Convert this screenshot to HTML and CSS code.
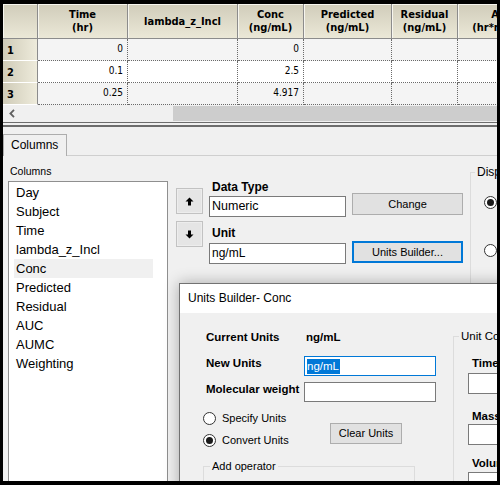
FILE: index.html
```html
<!DOCTYPE html>
<html>
<head>
<meta charset="utf-8">
<title>Columns</title>
<link rel="stylesheet" href="styles.css">
</head>
<body>
<div class="app">
  <div class="grid">
    <div class="row">
      <div class="hc"></div>
      <div class="hc">Time<br>(hr)</div>
      <div class="hc">lambda_z_Incl</div>
      <div class="hc">Conc<br>(ng/mL)</div>
      <div class="hc">Predicted<br>(ng/mL)</div>
      <div class="hc">Residual<br>(ng/mL)</div>
      <div class="hc">AUC<br>(hr*ng/mL)</div>
    </div>
    <div class="row alt">
      <div class="rh">1</div><div class="c">0</div><div class="c"></div><div class="c">0</div><div class="c"></div><div class="c"></div><div class="c"></div>
    </div>
    <div class="row">
      <div class="rh">2</div><div class="c">0.1</div><div class="c"></div><div class="c">2.5</div><div class="c"></div><div class="c"></div><div class="c"></div>
    </div>
    <div class="row alt">
      <div class="rh">3</div><div class="c">0.25</div><div class="c"></div><div class="c">4.917</div><div class="c"></div><div class="c"></div><div class="c"></div>
    </div>
  </div>

  <div class="hscroll">
    <div class="sarrow"><svg width="6" height="9" viewBox="0 0 6 9"><polyline points="5,0.8 1.4,4.5 5,8.2" fill="none" stroke="#606060" stroke-width="1.8"/></svg></div>
    <div class="track"><div class="thumb"></div></div>
  </div>
  <div class="splitter"></div>

  <div class="tabstrip"><div class="tab">Columns</div></div>

  <div class="tabpage">
    <div class="col-list">
      <div class="col-label">Columns</div>
      <div class="listbox">
        <div class="li">Day</div>
        <div class="li">Subject</div>
        <div class="li">Time</div>
        <div class="li">lambda_z_Incl</div>
        <div class="li sel">Conc</div>
        <div class="li">Predicted</div>
        <div class="li">Residual</div>
        <div class="li">AUC</div>
        <div class="li">AUMC</div>
        <div class="li">Weighting</div>
      </div>
    </div>
    <div class="col-arrows">
      <div class="abtn"><svg width="9" height="9" viewBox="0 0 9 9"><path d="M4.5 0.5 L8.5 4.5 H6 V8.5 H3 V4.5 H0.5 Z" fill="#000"/></svg></div>
      <div class="abtn"><svg width="9" height="9" viewBox="0 0 9 9"><path d="M4.5 8.5 L8.5 4.5 H6 V0.5 H3 V4.5 H0.5 Z" fill="#000"/></svg></div>
    </div>
    <div class="col-fields">
      <div class="flabel">Data Type</div>
      <div class="frow">
        <div class="tb tb-a">Numeric</div>
        <div class="btn btn-a">Change</div>
      </div>
      <div class="flabel flabel-unit">Unit</div>
      <div class="frow">
        <div class="tb tb-b">ng/mL</div>
        <div class="btn btn-b">Units Builder...</div>
      </div>
    </div>
    <fieldset class="dis">
      <legend>Display</legend>
      <div class="dis-inner">
        <div class="radio on dis-r1"></div>
        <div class="radio dis-r2"></div>
      </div>
    </fieldset>
  </div>

  <div class="dialog">
    <div class="dtitle">Units Builder- Conc</div>
    <div class="dbody">
      <div class="dleft">
        <div class="drow drow-1">
          <div class="dlabel">Current Units</div>
          <div class="dlabel dval">ng/mL</div>
        </div>
        <div class="drow drow-2">
          <div class="dlabel">New Units</div>
          <div class="dtb focus"><span class="hl">ng/mL</span></div>
        </div>
        <div class="drow drow-3">
          <div class="dlabel">Molecular weight</div>
          <div class="dtb"></div>
        </div>
        <div class="dmid">
          <div class="rgroup">
            <div class="ropt"><span class="radio"></span><span>Specify Units</span></div>
            <div class="ropt"><span class="radio on"></span><span>Convert Units</span></div>
          </div>
          <div class="clearbtn">Clear Units</div>
        </div>
        <fieldset class="addop">
          <legend>Add operator</legend>
        </fieldset>
      </div>
      <fieldset class="dright">
        <legend>Unit Conversion</legend>
        <div class="dright-inner">
          <div class="rlabel rl-time">Time</div>
          <div class="rtb rt-time"></div>
          <div class="rlabel rl-mass">Mass</div>
          <div class="rtb"></div>
          <div class="rlabel rl-vol">Volume</div>
          <div class="rtb rt-vol"></div>
        </div>
      </fieldset>
    </div>
  </div>
</div>
</body>
</html>
```

FILE: styles.css
```css
* { box-sizing: border-box; }
html, body { margin: 0; padding: 0; }
body {
  background: #000;
  width: 500px;
  height: 485px;
  padding: 4px 3px 4px 3px;
  overflow: hidden;
  font-family: "Liberation Sans", Arial, sans-serif;
  color: #000;
}
.app {
  position: relative;
  width: 494px;
  height: 477px;
  background: #f0f0f0;
  overflow: hidden;
}

/* ---------- data grid ---------- */
.grid {
  display: grid;
  grid-template-columns: 35px 90px 110px 66px 88px 66px 90px;
  grid-template-rows: 35px 22px 22px 22px;
  width: 545px;
  background: #fff;
  font-family: "DejaVu Sans Condensed", "DejaVu Sans", sans-serif;
  font-size: 10px;
}
.row { display: contents; }
.hc {
  background: linear-gradient(#d0ccba, #ebe8d7);
  border-right: 1px solid #8c8c8c;
  border-bottom: 1px solid #8c8c8c;
  box-shadow: inset 1px 1px 0 #f6f5ee;
  display: flex;
  align-items: center;
  justify-content: center;
  text-align: center;
  font-weight: bold;
  font-size: 11px;
  line-height: 13px;
  white-space: nowrap;
}
.rh {
  background: linear-gradient(90deg, #cfcbb8, #eeebdb);
  border-right: 1px solid #8c8c8c;
  border-bottom: 1px solid #fff;
  font-weight: bold;
  font-size: 11px;
  display: flex;
  align-items: center;
  padding-left: 4px;
  padding-top: 1px;
}
.c {
  border-right: 1px dotted #6a6a6a;
  border-bottom: 1px dotted #6a6a6a;
  text-align: right;
  padding-right: 4px;
  line-height: 20px;
}
.row.alt .c { background: #f4f4f4; }

/* ---------- scrollbar + splitter ---------- */
.hscroll {
  display: flex;
  height: 16px;
  background: #f0f0f0;
}
.sarrow {
  width: 17px;
  display: flex;
  align-items: center;
  justify-content: center;
}
.track {
  flex: 1;
  display: flex;
  padding: 1px 0 0 0;
}
.thumb {
  margin-left: 153px;
  flex: 1;
  background: #cdcdcd;
}
.splitter {
  height: 6px;
  background: linear-gradient(#f0f0f0 0 1px, #6d6d6d 1px 2px, #f0f0f0 2px 4px, #6d6d6d 4px 6px);
}

/* ---------- tab ---------- */
.tabstrip {
  height: 29px;
  padding-top: 7px;
  border-bottom: 1px solid #cfcfcf;
  display: flex;
}
.tab {
  width: 64px;
  height: 22px;
  border: 1px solid #adadad;
  border-bottom: none;
  background: #f0f0f0;
  font-size: 12px;
  line-height: 20px;
  padding-left: 7px;
}

.tabpage {
  display: flex;
  align-items: flex-start;
  height: 330px;
}
.col-list {
  flex-shrink: 0;
  width: 165px;
  padding: 8px 0 0 5px;
}
.col-label {
  font-size: 10.5px;
  line-height: 14px;
  padding-left: 2px;
  margin-bottom: 3px;
}
.listbox {
  width: 160px;
  height: 320px;
  background: #fff;
  border: 1px solid #8f8f8f;
  padding-top: 1px;
  font-size: 13px;
}
.li {
  height: 19px;
  line-height: 19px;
  margin-left: 5px;
  width: 139px;
  padding-left: 2px;
}
.li.sel { background: #f0f0f0; }

.col-arrows {
  flex-shrink: 0;
  margin-left: 8px;
  padding-top: 32px;
  display: flex;
  flex-direction: column;
  gap: 7px;
}
.abtn {
  width: 27px;
  height: 26px;
  background: #e5e5e5;
  border: 1px solid #c2c2c2;
  box-shadow: inset 0 0 0 1px #ededed;
  display: flex;
  align-items: center;
  justify-content: center;
}

.col-fields {
  flex-shrink: 0;
  width: 254px;
  margin-left: 6px;
  padding-top: 24px;
}
.flabel {
  font-size: 12px;
  font-weight: bold;
  line-height: 14px;
  padding-left: 3px;
}
.flabel-unit { margin-top: 9px; }
.frow {
  display: flex;
  gap: 6px;
  align-items: flex-start;
}
.tb {
  width: 137px;
  height: 21px;
  background: #fff;
  border: 1px solid #7a7a7a;
  font-size: 12px;
  line-height: 19px;
  padding-left: 2px;
}
.tb-a { margin-top: 2px; font-size: 12.5px; }
.tb-b { margin-top: 3px; }
.btn {
  width: 111px;
  height: 22px;
  background: #e1e1e1;
  border: 1px solid #adadad;
  font-size: 11px;
  text-align: center;
  line-height: 20px;
}
.btn-a { margin-top: -1px; }
.btn-b {
  margin-top: 1px;
  border: 2px solid #0078d7;
  line-height: 18px;
}

fieldset {
  margin: 0;
  padding: 0;
  min-width: 0;
  border: 1px solid #dcdcdc;
}
legend {
  padding: 0 2px;
  line-height: 14px;
  white-space: nowrap;
}
.dis {
  flex-shrink: 0;
  margin-left: 7px;
  margin-top: 9px;
  width: 110px;
  height: 130px;
}
.dis legend {
  font-size: 12px;
  margin-left: 4px;
}
.dis-inner { padding-left: 13px; }
.radio {
  display: flex;
  align-items: center;
  justify-content: center;
  width: 13px;
  height: 13px;
  flex-shrink: 0;
  border-radius: 50%;
  border: 1px solid #333;
  background: #fff;
}
.radio.on::after {
  content: "";
  width: 7px;
  height: 7px;
  border-radius: 50%;
  background: #1a1a1a;
}
.dis-r1 { margin-top: 17px; }
.dis-r2 { margin-top: 35px; }

/* ---------- dialog ---------- */
.dialog {
  position: absolute;
  left: 176px;
  top: 279px;
  width: 330px;
  height: 210px;
  border: 1px solid #727272;
  background: #f0f0f0;
  box-shadow: 0 0 14px rgba(0, 0, 0, 0.3);
}
.dtitle {
  height: 29px;
  background: #fff;
  font-size: 12px;
  line-height: 29px;
  padding-left: 8px;
}
.dbody {
  display: flex;
  align-items: flex-start;
}
.dleft {
  flex-shrink: 0;
  width: 273px;
  padding: 15px 0 0 26px;
}
.drow {
  display: grid;
  grid-template-columns: 98px 132px;
  align-items: start;
}
.dlabel {
  font-size: 11.5px;
  font-weight: bold;
  line-height: 14px;
  white-space: nowrap;
}
.drow-1 .dlabel { line-height: 18px; }
.dval { padding-left: 2px; }
.drow-2 { margin-top: 10px; }
.drow-3 { margin-top: 6px; }
.dtb {
  height: 20px;
  background: #fff;
  border: 1px solid #7a7a7a;
  padding-left: 2px;
  display: flex;
  align-items: center;
  font-size: 11.5px;
}
.dtb.focus { border-color: #0078d7; }
.hl {
  background: #0078d7;
  color: #fff;
  line-height: 15px;
  padding-right: 1px;
}
.dmid {
  display: flex;
  align-items: flex-start;
  margin-top: 5px;
  margin-left: -3px;
}
.rgroup { width: 127px; }
.ropt {
  height: 22px;
  display: flex;
  align-items: center;
  gap: 6px;
  font-size: 11px;
}
.clearbtn {
  margin-top: 16px;
  width: 72px;
  height: 21px;
  background: #e1e1e1;
  border: 1px solid #adadad;
  font-size: 11px;
  line-height: 19px;
  text-align: center;
}
.addop {
  margin-top: 8px;
  margin-left: -3px;
  width: 212px;
  height: 60px;
}
.addop legend {
  font-size: 11px;
  margin-left: 6px;
}
.dright {
  flex-shrink: 0;
  margin-top: 16px;
  width: 90px;
  height: 200px;
}
.dright legend {
  font-size: 11.5px;
  margin-left: 5px;
}
.dright-inner { padding-left: 14px; }
.rlabel {
  font-size: 11.5px;
  font-weight: bold;
  line-height: 14px;
  padding-left: 4px;
}
.rl-time { margin-top: 13px; }
.rl-mass { margin-top: 15px; }
.rl-vol { margin-top: 11px; }
.rtb {
  width: 70px;
  height: 21px;
  background: #fff;
  border: 1px solid #7a7a7a;
  margin-top: 1px;
}
.rt-time { margin-top: 3px; }
.rt-vol { margin-top: 2px; }
```
